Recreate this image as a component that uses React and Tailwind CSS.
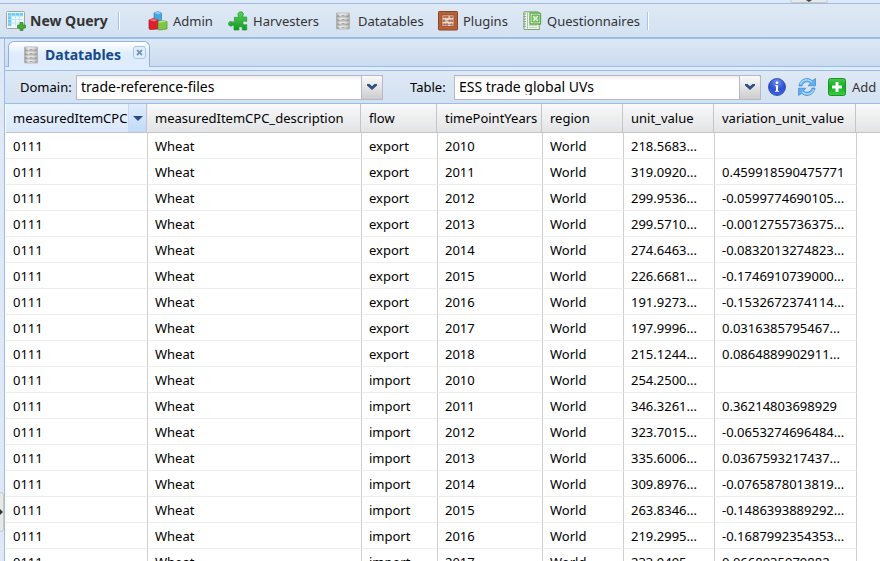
import React from "react";

const TableAddIcon = () => (
  <svg width="20" height="20" viewBox="0 0 20 20" className="shrink-0">
    <rect x="0.5" y="0.5" width="18" height="17" rx="1" fill="#f4f4f2" stroke="#a3a5a4" />
    <rect x="2" y="2" width="15" height="13" fill="#fff" />
    <path d="M2 2h15v3H5v10H2z" fill="#6ecdf5" />
    <path d="M5 5h12v10H5z" fill="#eef9fe" />
    <path d="M2 5h15M2 8.500h15M2 12h15M5.500 2v13M9.500 2v13M13.500 2v13" stroke="#b4e2f5" strokeWidth="0.8" />
    <path d="M14 11.500h3v2.500h2.500v3H17v2.500h-3V17h-2.500v-3H14z" fill="#43ad35" stroke="#2b8427" strokeWidth="0.7" />
  </svg>
);

const BricksIcon = () => (
  <svg width="20" height="20" viewBox="0 0 20 20" className="shrink-0">
    <path d="M6 2l4-1.500 3.500 1.500v8H6z" fill="#4aa5dd" stroke="#2f80bd" strokeWidth="0.7" />
    <path d="M6 2l4-1.500 3.500 1.500-3 1.200z" fill="#8ecdf0" />
    <path d="M1 9l4-1.500L10 9v9l-8 .5-1-.8z" fill="#df1f2d" stroke="#a91420" strokeWidth="0.7" />
    <path d="M1 9l4-1.500L10 9l-4 1.500z" fill="#f36a70" />
    <path d="M10 11l3-1.500 6 1v7.500l-8 1-1-.8z" fill="#7fc444" stroke="#569525" strokeWidth="0.7" />
    <path d="M10 11l3-1.500 6 1-7 1.200z" fill="#b7e386" />
  </svg>
);

const PuzzleIcon = () => (
  <svg width="20" height="20" viewBox="0 0 20 20" className="shrink-0">
    <defs>
      <linearGradient id="puzzle" x2="0" y2="1">
        <stop stopColor="#5fd060" />
        <stop offset="1" stopColor="#0f9a22" />
      </linearGradient>
    </defs>
    <path
      d="M6.500 6.300h4.300C10 4.500 9.500 3.500 10.300 2c1-1.600 4-1.600 4.800 0 .6 1.600-.4 2.500-.6 4h4.200v4.500c-1.200.2-2-1-3-.4-1.200.8-1.200 3 0 3.600 1.200.5 2-.6 3-.2V19h-4.500c0-1.600.7-2.200-.4-3-.9-.6-2.600-.4-3 .5-.4 1 .6 1.500.2 2.500H6v-5c-1.400 0-2 1.400-3.400 1.100C.2 14.700-.2 11.800 1.600 10.900c1.700-.8 2.600.4 4.700.3z"
      fill="url(#puzzle)"
      stroke="#1d9a2c"
      strokeWidth="0.7"
    />
  </svg>
);

const CabinetIcon = () => (
  <svg width="20" height="20" viewBox="0 0 20 20" className="shrink-0">
    <defs>
      <linearGradient id="cabinet" x2="1" y2="0">
        <stop stopColor="#8a8a8a" />
        <stop offset="0.3" stopColor="#e2e2e2" />
        <stop offset="0.65" stopColor="#d6d6d6" />
        <stop offset="1" stopColor="#959595" />
      </linearGradient>
    </defs>
    <rect x="3.500" y="2" width="13" height="16" rx="0.5" fill="url(#cabinet)" stroke="#b0b0b0" strokeWidth="0.8" />
    <path d="M4 6h12M4 10h12M4 14h12" stroke="#8c8c8c" strokeWidth="0.9" />
    <path d="M4 7h12M4 11h12M4 15h12M4 3h12" stroke="#f2f2f2" strokeWidth="0.7" />
    <path d="M8.500 4.500h3M8.500 8.500h3M8.500 12.500h3M8.500 16.500h3" stroke="#aaa" />
  </svg>
);

const AbacusIcon = () => (
  <svg width="20" height="20" viewBox="0 0 20 20" className="shrink-0">
    <rect x="0.5" y="0.5" width="19" height="18.500" rx="0.7" fill="#b66037" stroke="#8e4423" />
    <rect x="4" y="4" width="12" height="11.500" fill="#e6d9d1" stroke="#95492a" strokeWidth="0.8" />
    <path d="M4 6h12M4 9.800h12M4 13.500h12" stroke="#a18476" strokeWidth="0.7" />
    <g fill="#bb6d48">
      <circle cx="6.500" cy="6" r="1.300" /><circle cx="9" cy="6" r="1.300" /><circle cx="13.500" cy="6" r="1.300" />
      <circle cx="6" cy="9.800" r="1.300" /><circle cx="11.500" cy="9.800" r="1.300" /><circle cx="14" cy="9.800" r="1.300" />
      <circle cx="6.500" cy="13.500" r="1.300" /><circle cx="9" cy="13.500" r="1.300" /><circle cx="13.500" cy="13.500" r="1.300" />
    </g>
  </svg>
);

const SheetIcon = () => (
  <svg width="20" height="20" viewBox="0 0 20 20" className="shrink-0">
    <path d="M2 .8h14l1.500 17.700H2z" fill="#eef3ec" stroke="#78a673" />
    <path d="M1 3h3M1 5.500h3M1 8h3M1 10.500h3M1 13h3M1 15.500h3" stroke="#8d9a89" strokeWidth="0.9" />
    <path d="M5.500 1.500v17" stroke="#a9c6a3" />
    <path d="M7 14.500h8M7 16.500h8" stroke="#bcc8b8" strokeWidth="0.8" />
    <path d="M8 2h9.500l1 1v10H8z" fill="#e9f7df" stroke="#5ba84c" strokeWidth="1.300" />
    <rect x="10" y="4" width="7" height="7" fill="#8bc878" />
    <path d="M11 5l5 5M16 5l-5 5" stroke="#d8f2cb" strokeWidth="1.500" />
    <path d="M10 4h7v7h-7z" fill="none" stroke="#4f9c42" strokeWidth="0.8" />
  </svg>
);

const InfoIcon = () => (
  <svg width="20" height="20" viewBox="0 0 20 20">
    <defs>
      <radialGradient id="info" cx="0.5" cy="0.2" r="0.8">
        <stop stopColor="#6f93ee" />
        <stop offset="0.6" stopColor="#2c50d0" />
        <stop offset="1" stopColor="#3d67e0" />
      </radialGradient>
    </defs>
    <circle cx="10" cy="10" r="8.500" fill="url(#info)" stroke="#2541a8" strokeWidth="0.8" />
    <circle cx="10" cy="5.800" r="1.300" fill="#fff" />
    <path d="M8 8.300h3v5.500h1.200v1H8v-1h1V9.300H8z" fill="#fff" />
  </svg>
);

const RefreshIcon = () => (
  <svg width="20" height="20" viewBox="0 0 20 20">
    <g fill="#61aef0" stroke="#2c7cce" strokeWidth="0.6" strokeLinejoin="round">
      <path d="M2 9C2.500 4.500 6 1.500 10 1.500c2 0 3.800.8 5.200 2.200L18.500 1.500v7.300h-7.300l2.300-2.700C11 4 6.500 4.200 5 9z" />
      <path d="M18 11c-.5 4.500-4 7.500-8 7.500-2 0-3.800-.8-5.200-2.200L1.500 18.500v-7.300h7.300l-2.300 2.700C9 16 13.500 15.800 15 11z" />
    </g>
    <path d="M3.300 7.500C4.500 4.500 7 2.800 10 2.800c1.800 0 3.500.8 4.800 2.200M16.700 12.500c-1.200 3-3.700 4.700-6.700 4.700-1.800 0-3.500-.8-4.800-2.200" fill="none" stroke="#b5dbfa" strokeWidth="1.200" />
  </svg>
);

const AddIcon = () => (
  <svg width="20" height="20" viewBox="0 0 20 20" className="shrink-0">
    <defs>
      <linearGradient id="add" x2="0" y2="1">
        <stop stopColor="#49c950" />
        <stop offset="0.5" stopColor="#10ad20" />
        <stop offset="1" stopColor="#3bd23e" />
      </linearGradient>
    </defs>
    <rect x="1.500" y="1.500" width="17" height="17" rx="2" fill="url(#add)" stroke="#1d9127" />
    <path d="M8.500 5h3v3.500H15v3h-3.500V15h-3v-3.500H5v-3h3.500z" fill="#fff" />
  </svg>
);

const MENU = [
  { label: "Admin", Icon: BricksIcon, width: "w-20" },
  { label: "Harvesters", Icon: PuzzleIcon, width: "w-[105px]" },
  { label: "Datatables", Icon: CabinetIcon, width: "w-[105px]" },
  { label: "Plugins", Icon: AbacusIcon, width: "w-[84px]" },
  { label: "Questionnaires", Icon: SheetIcon, width: "w-[125px]" },
];

const COLUMNS = [
  { name: "measuredItemCPC", width: "w-[142px]" },
  { name: "measuredItemCPC_description", width: "w-[214px]" },
  { name: "flow", width: "w-[76px]" },
  { name: "timePointYears", width: "w-[105px]" },
  { name: "region", width: "w-[81px]" },
  { name: "unit_value", width: "w-[91px]" },
  { name: "variation_unit_value", width: "w-[142px]" },
];

const ROWS = [
  ["export", "2010", "218.5683...", ""],
  ["export", "2011", "319.0920...", "0.459918590475771"],
  ["export", "2012", "299.9536...", "-0.0599774690105..."],
  ["export", "2013", "299.5710...", "-0.0012755736375..."],
  ["export", "2014", "274.6463...", "-0.0832013274823..."],
  ["export", "2015", "226.6681...", "-0.1746910739000..."],
  ["export", "2016", "191.9273...", "-0.1532672374114..."],
  ["export", "2017", "197.9996...", "0.0316385795467..."],
  ["export", "2018", "215.1244...", "0.0864889902911..."],
  ["import", "2010", "254.2500...", ""],
  ["import", "2011", "346.3261...", "0.36214803698929"],
  ["import", "2012", "323.7015...", "-0.0653274696484..."],
  ["import", "2013", "335.6006...", "0.0367593217437..."],
  ["import", "2014", "309.8976...", "-0.0765878013819..."],
  ["import", "2015", "263.8346...", "-0.1486393889292..."],
  ["import", "2016", "219.2995...", "-0.1687992354353..."],
  ["import", "2017", "233.9495...", "0.0668035979882..."],
];

function Separator() {
  return <span className="h-[18px] w-[2px] shrink-0 border-l border-[#98c8ff] bg-white" />;
}

function Combo({ id, value }) {
  return (
    <div className="relative h-[25px] w-[307px] shrink-0">
      <select
        id={id}
        defaultValue={value}
        className="block h-full w-full appearance-none border border-[#b5b8c8] bg-linear-to-b from-[#eeeeee] to-white to-20% pl-1 text-[14px] text-black outline-none"
      >
        <option>{value}</option>
      </select>
      <span className="pointer-events-none absolute inset-y-0 right-0 flex w-[22px] items-center justify-center rounded-r-xs border border-[#b5b8c8] bg-linear-to-b from-[#fafafa] to-[#cdcdcd]">
        <svg width="12" height="8" viewBox="0 0 12 8">
          <path d="M1 1h2.500L6 3.200 8.500 1H11v1.500L6 7 1 2.500z" fill="#2f4f88" />
        </svg>
      </span>
    </div>
  );
}

export default function App() {
  return (
    <div className="flex h-screen flex-col overflow-hidden bg-[#dfe8f6] font-['Noto_Sans',sans-serif] text-[13px] leading-4 text-black">
      <div className="relative h-[3px] shrink-0">
        <span className="absolute top-0 right-[52px] flex h-[3px] w-[38px] justify-center rounded-b-md border-x border-b border-[#c8c8c8] bg-[#e8e8e8]">
          <svg width="6" height="2" viewBox="0 0 6 2"><path d="M0 0h6L3 2z" fill="#444" /></svg>
        </span>
      </div>
      <nav className="flex h-[36px] shrink-0 items-center border-t border-b-2 border-[#99bce8] bg-linear-to-b from-[#dfe9f5] to-[#d3e1f1] pl-[6px] whitespace-nowrap text-[#333]">
        <button className="flex w-28 shrink-0 items-center gap-1 text-[14px] font-bold">
          <TableAddIcon />
          New Query
        </button>
        <Separator />
        <div className="ml-7 flex">
          {MENU.map(({ label, Icon, width }) => (
            <button key={label} className={`flex shrink-0 items-center gap-[5px] ${width}`}>
              <Icon />
              {label}
            </button>
          ))}
        </div>
        <Separator />
      </nav>

      <div className="flex min-h-0 flex-1">
        <div className="relative w-1 shrink-0">
          <button aria-label="Expand panel" className="absolute bottom-[29px] left-0 flex h-[40px] w-1 items-center rounded-r-sm border-y border-r border-[#c8c8c8] bg-[#e8e8e8]">
            <svg width="3" height="6" viewBox="0 0 3 6"><path d="M0 0l3 3-3 3z" fill="#333" /></svg>
          </button>
        </div>
        <main className="flex min-w-0 flex-1 flex-col border-l border-[#99bce8] bg-white">
          <div className="flex h-[28px] shrink-0 items-end border-b border-[#99bce8] bg-linear-to-b from-[#dde8f5] to-[#cbdbef] pl-[3px]">
            <div className="-mb-px flex h-[26px] w-[142px] rounded-t-md border-x border-t border-[#8db2e3] bg-linear-to-b from-white to-[#deecfd] to-50% pl-3">
              <button className="flex flex-1 items-center gap-1 text-[14px] font-bold text-[#15498b]">
                <CabinetIcon />
                Datatables
              </button>
              <button aria-label="Close tab" className="mt-1 mr-[3px] flex size-[13px] shrink-0 items-center justify-center rounded-[3px] border border-[#a9c4e6] bg-[#e3eefb]">
                <svg width="7" height="7" viewBox="0 0 7 7"><path d="M1 1l5 5M6 1L1 6" stroke="#7594bf" strokeWidth="1.800" /></svg>
              </button>
            </div>
          </div>
          <div className="h-[3px] shrink-0 bg-[#deecfd]" />
          <div className="flex h-[34px] shrink-0 items-center border-y border-[#99bce8] bg-linear-to-b from-[#dfe9f5] to-[#d3e1f1] pl-[15px] whitespace-nowrap">
            <label htmlFor="domain" className="w-14 shrink-0">Domain:</label>
            <Combo id="domain" value="trade-reference-files" />
            <label htmlFor="table" className="ml-[27px] w-[44px] shrink-0">Table:</label>
            <Combo id="table" value="ESS trade global UVs" />
            <button aria-label="Information" className="ml-[6px] shrink-0"><InfoIcon /></button>
            <button aria-label="Refresh" className="ml-[10px] shrink-0"><RefreshIcon /></button>
            <button className="ml-[10px] flex shrink-0 items-center gap-[5px] text-[#333]">
              <AddIcon />
              Add
            </button>
          </div>

          <div className="min-h-0 flex-1 overflow-hidden pl-px">
            <table className="w-full table-fixed border-separate border-spacing-0 whitespace-nowrap">
              <thead>
                <tr className="h-[29px]">
                  {COLUMNS.map(({ name, width }, i) => (
                    <th
                      key={name}
                      className={`border-b border-[#c5c5c5] p-0 text-left font-normal ${width} ${
                        i === 0 ? "bg-linear-to-b from-[#ebf3fd] to-[#d9e8fb]" : "bg-linear-to-b from-[#f9f9f9] to-[#e3e4e6]"
                      }`}
                    >
                      <div className={`mr-px flex h-7 items-center border-r border-[#c5c5c5] pl-[7px] ${i === 0 ? "justify-between" : ""}`}>
                        {name}
                        {i === 0 && (
                          <button aria-label="Column menu" className="flex h-7 w-[18px] shrink-0 items-center justify-center border-l border-[#c5d9f2] bg-linear-to-b from-[#e0edfd] to-[#c0daf9]">
                            <svg width="10" height="5" viewBox="0 0 10 5"><path d="M0 0h10L5 5z" fill="#2a4b8c" /></svg>
                          </button>
                        )}
                      </div>
                    </th>
                  ))}
                  <td className="border-b border-[#c5c5c5] bg-linear-to-b from-[#f9f9f9] to-[#e3e4e6]" />
                </tr>
              </thead>
              <tbody>
                {ROWS.map(([flow, year, unit, variation]) => (
                  <tr key={flow + year} className="h-[26px]">
                    {["0111", "Wheat", flow, year, "World", unit, variation].map((cell, i) => (
                      <td key={i} className="border-r border-b border-r-[#d0d0d0] border-b-[#ededed] p-0 pl-[7px]">
                        {cell}
                      </td>
                    ))}
                    <td />
                  </tr>
                ))}
              </tbody>
            </table>
          </div>
        </main>
      </div>
    </div>
  );
}
